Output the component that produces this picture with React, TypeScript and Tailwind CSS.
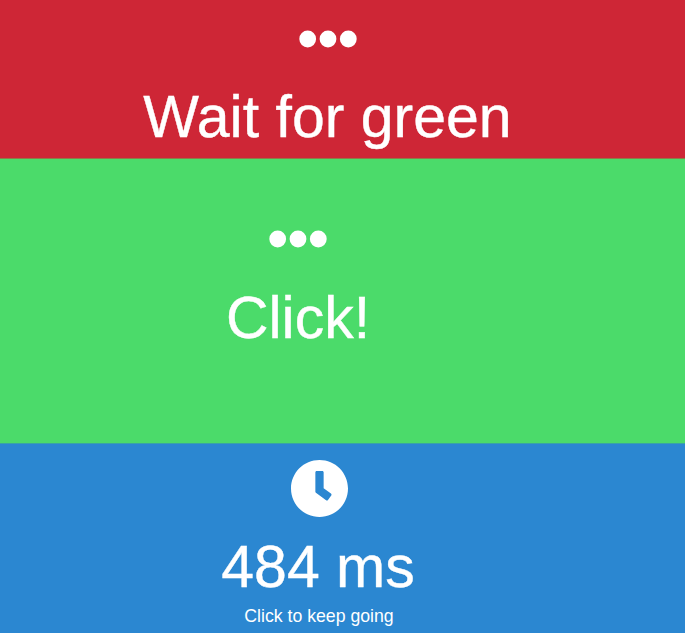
function Dots() {
  return (
    <svg className="h-[18px] w-[58px]" viewBox="0 0 58 18" fill="currentColor" aria-hidden="true">
      <circle cx="8.7" cy="9" r="8.4" />
      <circle cx="29" cy="9" r="8.4" />
      <circle cx="49.3" cy="9" r="8.4" />
    </svg>
  )
}

function Clock() {
  return (
    <svg className="h-[57px] w-[57px]" viewBox="8 8 496 496" fill="currentColor" aria-hidden="true">
      <path d="M256 8C119 8 8 119 8 256s111 248 248 248 248-111 248-248S393 8 256 8zm57.1 350.1L224.9 294c-3.1-2.3-4.9-5.9-4.9-9.7V116c0-6.6 5.4-12 12-12h48c6.6 0 12 5.4 12 12v137.7l63.5 46.2c5.4 3.9 6.5 11.4 2.6 16.8l-28.2 38.8c-3.9 5.3-11.4 6.5-16.8 2.6z" />
    </svg>
  )
}

export default function App() {
  return (
    <main className="flex h-[633px] w-[685px] flex-col overflow-hidden font-['Liberation_Sans',Arial,sans-serif] text-white">
      <section className="flex h-[158px] flex-col items-center bg-[#ce2636] pr-[30px] pt-[30px]">
        <Dots />
        <h1 className="mt-[36px] whitespace-nowrap text-[59px] leading-[66px] [-webkit-text-stroke:0.4px_white]">Wait for green</h1>
      </section>

      <section className="flex h-[285px] flex-col items-center border-t border-[#8f7a48] bg-[#4bdb6a] pr-[89px] pt-[71px]">
        <Dots />
        <h1 className="mt-[37px] whitespace-nowrap text-[59px] leading-[66px] [-webkit-text-stroke:0.4px_white]">Click!</h1>
      </section>

      <section className="flex h-[190px] flex-col items-center border-t border-[#3aa3a5] bg-[#2b87d1] pr-[47px] pt-[16px]">
        <Clock />
        <h1 className="mr-[2px] mt-[17px] whitespace-nowrap text-[59px] leading-[66px] [-webkit-text-stroke:0.4px_white]">484 ms</h1>
        <p className="mt-[6px] whitespace-nowrap text-[17.7px] leading-[20px]">Click to keep going</p>
      </section>
    </main>
  )
}
